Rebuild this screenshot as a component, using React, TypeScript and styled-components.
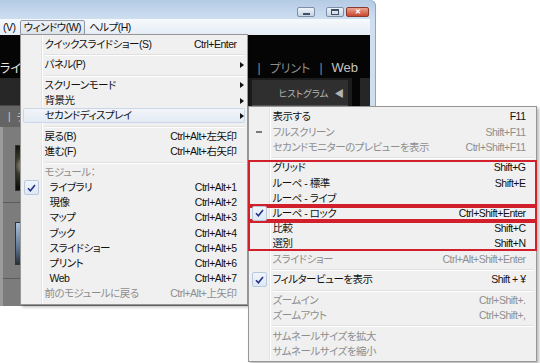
import React from 'react';
import styled, { createGlobalStyle } from 'styled-components';

type Entry = {
  label: string;
  shortcut?: string;
  sub?: boolean;
  mark?: 'check' | 'dash';
  disabled?: boolean;
  indent?: boolean;
};
type Line = Entry | 'sep' | Entry[];

const windowMenu: Line[] = [
  { label: 'クイックスライドショー(S)', shortcut: 'Ctrl+Enter' },
  'sep',
  { label: 'パネル(P)', sub: true },
  'sep',
  { label: 'スクリーンモード', sub: true },
  { label: '背景光', sub: true },
  { label: 'セカンドディスプレイ', sub: true },
  'sep',
  { label: '戻る(B)', shortcut: 'Ctrl+Alt+左矢印' },
  { label: '進む(F)', shortcut: 'Ctrl+Alt+右矢印' },
  'sep',
  { label: 'モジュール：', disabled: true },
  { label: 'ライブラリ', shortcut: 'Ctrl+Alt+1', mark: 'check', indent: true },
  { label: '現像', shortcut: 'Ctrl+Alt+2', indent: true },
  { label: 'マップ', shortcut: 'Ctrl+Alt+3', indent: true },
  { label: 'ブック', shortcut: 'Ctrl+Alt+4', indent: true },
  { label: 'スライドショー', shortcut: 'Ctrl+Alt+5', indent: true },
  { label: 'プリント', shortcut: 'Ctrl+Alt+6', indent: true },
  { label: 'Web', shortcut: 'Ctrl+Alt+7', indent: true },
  { label: '前のモジュールに戻る', shortcut: 'Ctrl+Alt+上矢印', disabled: true },
];

const secondDisplayMenu: Line[] = [
  { label: '表示する', shortcut: 'F11' },
  { label: 'フルスクリーン', shortcut: 'Shift+F11', mark: 'dash', disabled: true },
  { label: 'セカンドモニターのプレビューを表示', shortcut: 'Ctrl+Shift+F11', disabled: true },
  'sep',
  [
    { label: 'グリッド', shortcut: 'Shift+G' },
    { label: 'ルーペ - 標準', shortcut: 'Shift+E' },
    { label: 'ルーペ - ライブ' },
  ],
  [{ label: 'ルーペ - ロック', shortcut: 'Ctrl+Shift+Enter', mark: 'check' }],
  [
    { label: '比較', shortcut: 'Shift+C' },
    { label: '選別', shortcut: 'Shift+N' },
  ],
  { label: 'スライドショー', shortcut: 'Ctrl+Alt+Shift+Enter', disabled: true },
  'sep',
  { label: 'フィルタービューを表示', shortcut: 'Shift + ¥', mark: 'check' },
  'sep',
  { label: 'ズームイン', shortcut: 'Ctrl+Shift+.', disabled: true },
  { label: 'ズームアウト', shortcut: 'Ctrl+Shift+,', disabled: true },
  'sep',
  { label: 'サムネールサイズを拡大', disabled: true },
  { label: 'サムネールサイズを縮小', disabled: true },
];

const GlobalStyle = createGlobalStyle`
  body {
    margin: 0;
    background: #fff;
    font-family: "Liberation Sans", "Noto Sans CJK JP", sans-serif;
    font-feature-settings: "palt";
  }
`;

const Page = styled.div`
  position: relative;
  width: 540px;
  height: 363px;
  overflow: hidden;
  background: #fff;
`;

const Window = styled.div`
  width: 376px;
  height: 306px;
  display: flex;
  flex-direction: column;
  background: linear-gradient(#b4cbe4, #cfdff1 20px, #c7dbef);
  border-top-right-radius: 6px;
  box-shadow: inset -1px 0 0 #8aa6c4;
`;

const TitleBar = styled.div`
  height: 19px;
  display: flex;
  justify-content: flex-end;
  align-items: flex-end;
  padding: 0 7px 2px 0;
  box-sizing: border-box;
`;

const CaptionButton = styled.span<{ $close?: boolean; $gap?: number }>`
  width: ${(p) => (p.$close ? 21 : 16)}px;
  height: 8px;
  margin-left: ${(p) => p.$gap ?? 0}px;
  border: 1px solid ${(p) => (p.$close ? '#8a3b2f' : '#7d8fa6')};
  border-radius: 2px;
  background: ${(p) =>
    p.$close ? 'linear-gradient(#eba48f, #c8462f)' : 'linear-gradient(#eef3f9, #c4d3e4)'};
  display: flex;
  align-items: center;
  justify-content: center;
  color: #fff;
  font-size: 7px;
  font-weight: bold;
`;

const MinGlyph = styled.span`
  width: 7px;
  height: 2px;
  margin-top: 3px;
  background: #3d4f66;
`;

const MaxGlyph = styled.span`
  width: 6px;
  height: 3px;
  border: 1px solid #3d4f66;
  border-top-width: 2px;
`;

const Client = styled.div`
  flex: 1;
  margin-right: 6px;
  display: flex;
  flex-direction: column;
  background: #000;
`;

const MenuBar = styled.div`
  height: 16px;
  display: flex;
  align-items: center;
  background: linear-gradient(#f6f9fc, #e6edf6);
  font-size: 10.5px;
  letter-spacing: -0.5px;
  color: #111;
`;

const MenuBarItem = styled.div<{ $open?: boolean; $lead?: boolean }>`
  position: relative;
  height: 13px;
  line-height: 13px;
  padding: 0 3px;
  margin-left: ${(p) => (p.$lead ? -1 : 0)}px;
  border: 1px solid ${(p) => (p.$open ? '#8e98a5' : 'transparent')};
  border-radius: 2px;
  background: ${(p) => (p.$open ? 'linear-gradient(#edf1f6, #dde4ec)' : 'none')};
`;

const AppBody = styled.div`
  flex: 1;
  display: flex;
  flex-direction: column;
  min-height: 0;
`;

const ModuleBar = styled.div`
  height: 43px;
  display: flex;
  justify-content: space-between;
  align-items: center;
  padding: 22px 12px 0 0;
  box-sizing: border-box;
  background: #050505;
  font-size: 12px;
  color: #8d8d8d;
`;

const ModuleGroup = styled.div`
  display: flex;
  align-items: center;
  gap: 9px;
`;

const ModuleName = styled.span<{ $current?: boolean; $hover?: boolean }>`
  color: ${(p) => (p.$current ? '#e6e6e6' : p.$hover ? '#c4c4c4' : '#8d8d8d')};
  font-size: ${(p) => (p.$hover ? 13 : 12)}px;
`;

const Workspace = styled.div`
  flex: 1;
  display: flex;
  min-height: 0;
`;

const CenterColumn = styled.div`
  flex: 1;
  display: flex;
  flex-direction: column;
`;

const ToolStrip = styled.div`
  height: 27px;
  background: #272727;
`;

const FilterBar = styled.div`
  height: 22px;
  display: flex;
  align-items: center;
  gap: 6px;
  padding-left: 8px;
  background: #646464;
  border-top: 1px solid #444;
  box-sizing: border-box;
  font-size: 10px;
  color: #cfcfcf;
`;

const Grid = styled.div`
  flex: 1;
  display: flex;
  flex-direction: column;
  background: #7c7c7c;
  border-left: 3px solid #9b9b9b;
`;

const Cell = styled.div`
  height: 76px;
  display: flex;
  align-items: center;
  padding: 6px 0 0 12px;
  box-sizing: border-box;
  border-bottom: 1px solid #5c5c5c;
`;

const Thumb = styled.div<{ $tone: 'dark' | 'sky' }>`
  width: 60px;
  height: ${(p) => (p.$tone === 'dark' ? 44 : 41)}px;
  border: 1px solid #333;
  background: ${(p) =>
    p.$tone === 'dark'
      ? 'radial-gradient(ellipse at 35% 45%, #e8dcc4 0 18%, #3a3a2c 40%, #101010 70%)'
      : 'linear-gradient(#a9c1dc, #5d7592 60%, #2b3038)'};
`;

const RightPanel = styled.div`
  width: 122px;
  display: flex;
  background: #1c1c1c;
`;

const PanelBody = styled.div`
  flex: 1;
  padding: 2px 4px 0 4px;
`;

const PanelHeader = styled.div`
  height: 25px;
  display: flex;
  justify-content: flex-end;
  align-items: center;
  gap: 6px;
  padding-right: 4px;
  background: #2f2f2f;
  border-bottom: 1px solid #555;
  font-size: 9.5px;
  color: #b3b3b3;
`;

const PanelEdge = styled.div`
  width: 10px;
  background: #262626;
  border-left: 8px solid #050505;
`;

const MenuPanel = styled.div<{ $width: number; $sub?: boolean }>`
  position: absolute;
  z-index: ${(p) => (p.$sub ? 3 : 2)};
  left: ${(p) => (p.$sub ? 'calc(100% + 3px)' : '-1px')};
  top: ${(p) => (p.$sub ? '-2px' : '100%')};
  width: ${(p) => p.$width}px;
  box-sizing: border-box;
  padding: 2px;
  border: 1px solid #979797;
  background: linear-gradient(
      to right,
      transparent 20px,
      #e2e3e3 20px 21px,
      #ffffff 21px 22px,
      transparent 22px
    ),
    #f0f0f0;
  box-shadow: 2px 2px 3px rgba(0, 0, 0, 0.28);
  font-size: 10.5px;
  letter-spacing: -0.5px;
  line-height: 15px;
  color: #111;
  cursor: default;
`;

const Row = styled.div<{ $disabled?: boolean; $open?: boolean }>`
  position: relative;
  height: 15.2px;
  display: grid;
  grid-template-columns: 22px 1fr auto 8px;
  align-items: center;
  white-space: nowrap;
  color: ${(p) => (p.$disabled ? '#8e8e8e' : '#111')};
  border-radius: 2px;
  background: ${(p) => (p.$open ? 'linear-gradient(#f3f6fa, #e3eaf3)' : 'none')};
  box-shadow: ${(p) => (p.$open ? 'inset 0 0 0 1px #c9d7e8' : 'none')};
`;

const Gutter = styled.span`
  height: 100%;
  display: flex;
  align-items: center;
`;

const CheckBox = styled.span`
  width: 13px;
  height: 13px;
  margin-left: 1px;
  display: flex;
  align-items: center;
  justify-content: center;
  border: 1px solid #b7c9df;
  border-radius: 2px;
  background: linear-gradient(#f0f5fb, #dfe8f3);
`;

const Dash = styled.span`
  width: 6px;
  height: 2px;
  margin-left: 5px;
  background: #7a7a7a;
`;

const Label = styled.span<{ $indent?: boolean }>`
  padding-left: ${(p) => (p.$indent ? 5 : 0)}px;
`;

const Shortcut = styled.span`
  padding-left: 16px;
  text-align: right;
`;

const Arrow = styled.span`
  justify-self: end;
  width: 0;
  height: 0;
  margin-right: 1px;
  border-top: 3.5px solid transparent;
  border-bottom: 3.5px solid transparent;
  border-left: 4px solid #111;
`;

const Separator = styled.div`
  height: 5.5px;
  display: flex;
  align-items: center;
  padding-left: 22px;

  &::before {
    content: '';
    flex: 1;
    height: 1px;
    background: #e0e0e0;
    box-shadow: 0 1px 0 #fff;
  }
`;

const Marked = styled.div`
  margin: 0 -3px;
  padding: 0 3px;
  box-shadow: inset 0 0 0 2px #d1202b;
`;

const CheckIcon = () => (
  <svg width="9" height="8" viewBox="0 0 9 8">
    <path d="M1 4.3 L3.4 6.7 L8 1" fill="none" stroke="#25318a" strokeWidth="1.6" />
  </svg>
);

const MenuRow = ({ entry, open, children }: { entry: Entry; open?: boolean; children?: React.ReactNode }) => (
  <Row $disabled={entry.disabled} $open={open}>
    <Gutter>
      {entry.mark === 'check' && (
        <CheckBox>
          <CheckIcon />
        </CheckBox>
      )}
      {entry.mark === 'dash' && <Dash />}
    </Gutter>
    <Label $indent={entry.indent}>{entry.label}</Label>
    <Shortcut>{entry.shortcut}</Shortcut>
    {entry.sub ? <Arrow /> : <span />}
    {children}
  </Row>
);

const MenuLines = ({ lines, openLabel, children }: { lines: Line[]; openLabel?: string; children?: React.ReactNode }) => (
  <>
    {lines.map((line, i) => {
      if (line === 'sep') return <Separator key={i} />;
      if (Array.isArray(line))
        return (
          <Marked key={i}>
            {line.map((e) => (
              <MenuRow key={e.label} entry={e} />
            ))}
          </Marked>
        );
      const open = line.label === openLabel;
      return (
        <MenuRow key={i} entry={line} open={open}>
          {open && children}
        </MenuRow>
      );
    })}
  </>
);

const App = () => (
  <Page>
    <GlobalStyle />
    <Window>
      <TitleBar>
        <CaptionButton>
          <MinGlyph />
        </CaptionButton>
        <CaptionButton $gap={11}>
          <MaxGlyph />
        </CaptionButton>
        <CaptionButton $close $gap={2}>
          ✕
        </CaptionButton>
      </TitleBar>
      <Client>
        <MenuBar>
          <MenuBarItem $lead>(V)</MenuBarItem>
          <MenuBarItem $open>
            ウィンドウ(W)
            <MenuPanel $width={228}>
              <MenuLines lines={windowMenu} openLabel="セカンドディスプレイ">
                <MenuPanel $width={289} $sub>
                  <MenuLines lines={secondDisplayMenu} />
                </MenuPanel>
              </MenuLines>
            </MenuPanel>
          </MenuBarItem>
          <MenuBarItem>ヘルプ(H)</MenuBarItem>
        </MenuBar>
        <AppBody>
          <ModuleBar>
            <ModuleGroup>
              <ModuleName $current>ライブラリ</ModuleName>
            </ModuleGroup>
            <ModuleGroup>
              <ModuleName>スライドショー</ModuleName>
              <span>|</span>
              <ModuleName>プリント</ModuleName>
              <span>|</span>
              <ModuleName $hover>Web</ModuleName>
            </ModuleGroup>
          </ModuleBar>
          <Workspace>
            <CenterColumn>
              <ToolStrip />
              <FilterBar>
                <span>|</span>
                <span>テキスト</span>
              </FilterBar>
              <Grid>
                <Cell>
                  <Thumb $tone="dark" />
                </Cell>
                <Cell>
                  <Thumb $tone="sky" />
                </Cell>
              </Grid>
            </CenterColumn>
            <RightPanel>
              <PanelBody>
                <PanelHeader>
                  <span>ヒストグラム</span>
                  <span>◀</span>
                </PanelHeader>
              </PanelBody>
              <PanelEdge />
            </RightPanel>
          </Workspace>
        </AppBody>
      </Client>
    </Window>
  </Page>
);

export default App;
